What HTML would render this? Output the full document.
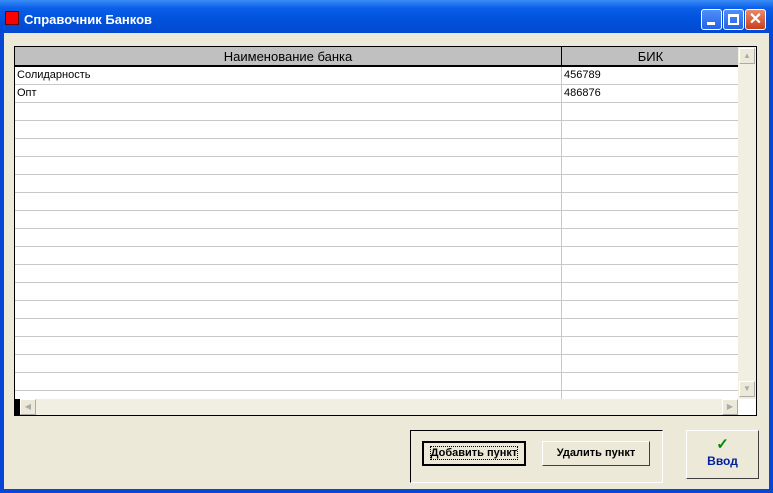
<!DOCTYPE html>
<html><head><meta charset="utf-8"><style>
*{margin:0;padding:0;box-sizing:border-box}
body{width:773px;height:493px;overflow:hidden;background:#ECE9D8;font-family:"Liberation Sans",sans-serif;position:relative}
.tb{position:absolute;left:0;top:0;width:773px;height:33px;background:linear-gradient(#3a8cf6 0%,#0a5ee8 25%,#0052dc 60%,#0349d0 100%)}
.tb .ic{position:absolute;left:5px;top:11px;width:14px;height:14px;background:#f00;border:1px solid #600}
.tb .t{position:absolute;left:24px;top:12px;color:#fff;font-weight:bold;font-size:13px}
.b{position:absolute;top:9px;width:21px;height:21px;border:1px solid #fff;border-radius:3px;background:linear-gradient(#4f8ff8,#2462e6)}
.lb{position:absolute;left:0;top:33px;width:4px;height:460px;background:#0846d8}
.rb{position:absolute;right:0;top:33px;width:4px;height:460px;background:#0846d8}
.bb{position:absolute;left:0;top:489px;width:773px;height:4px;background:#0846d8}
.grid{position:absolute;left:14px;top:46px;width:743px;height:370px;background:#fff;border:1px solid #000}
.hd{position:absolute;left:0;top:0;height:20px;background:#c0c0c0;border-bottom:2px solid #000;font-size:13px;text-align:center;line-height:19px;color:#000}
.row{position:absolute;left:0;width:724px;height:18px;border-bottom:1px solid #c8c8c8;font-size:11px;line-height:17px}
.row span{position:absolute;left:2px}.row span+span{left:549px}
.vl{position:absolute;left:546px;top:20px;width:1px;height:332px;background:#c8c8c8}
.vs{position:absolute;left:723px;top:0;width:18px;height:352px;background:#f1efe2}
.hs{position:absolute;left:5px;top:352px;width:718px;height:16px;background:#f1efe2}
.sb{position:absolute;width:16px;height:16px;background:#ece9d8;border:1px solid #fff;border-right-color:#aaa;border-bottom-color:#aaa;font-size:8px;color:#aaa;text-align:center;line-height:14px}
.gb{position:absolute;left:410px;top:430px;width:253px;height:53px;border:1px solid #000;border-right-color:#fff;border-bottom-color:#fff}
.btn{position:absolute;height:25px;background:#ece9d8;border:1px solid #fff;border-right-color:#404040;border-bottom-color:#404040;font-size:11px;font-weight:bold;text-align:center;line-height:22px}
</style></head><body>
<div class="tb"><div class="ic"></div><div class="t">Справочник Банков</div>
<div class="b" style="left:701px"><div style="position:absolute;left:5px;top:12px;width:8px;height:3px;background:#fff"></div></div>
<div class="b" style="left:723px"><div style="position:absolute;left:4px;top:4px;width:11px;height:11px;border:2px solid #fff;border-top-width:3px"></div></div>
<div class="b" style="left:745px;background:linear-gradient(#e88a6a,#c8401c);color:#fff;font-size:16px;font-weight:bold;text-align:center;line-height:19px">✕</div>
</div>
<div class="lb"></div><div class="rb"></div><div class="bb"></div>
<div class="grid">
<div class="hd" style="width:547px;border-right:1px solid #000">Наименование банка</div>
<div class="hd" style="left:547px;width:177px">БИК</div>
<div class="row" style="top:20px"><span>Солидарность</span><span>456789</span></div>
<div class="row" style="top:38px"><span>Опт</span><span>486876</span></div>
<div class="row" style="top:56px"></div><div class="row" style="top:74px"></div><div class="row" style="top:92px"></div><div class="row" style="top:110px"></div><div class="row" style="top:128px"></div><div class="row" style="top:146px"></div><div class="row" style="top:164px"></div><div class="row" style="top:182px"></div><div class="row" style="top:200px"></div><div class="row" style="top:218px"></div><div class="row" style="top:236px"></div><div class="row" style="top:254px"></div><div class="row" style="top:272px"></div><div class="row" style="top:290px"></div><div class="row" style="top:308px"></div><div class="row" style="top:326px"></div>
<div class="vl"></div>
<div class="vs"><div class="sb" style="left:1px;top:1px">▲</div><div class="sb" style="left:1px;top:334px">▼</div></div>
<div style="position:absolute;left:0;top:352px;width:5px;height:16px;background:#000"></div>
<div class="hs"><div class="sb" style="left:0;top:0">◀</div><div class="sb" style="left:702px;top:0">▶</div></div>
</div>
<div class="gb"></div>
<div class="btn" style="left:422px;top:441px;width:104px;border:2px solid #000;line-height:20px"><span style="outline:1px dotted #000">Добавить пункт</span></div>
<div class="btn" style="left:542px;top:441px;width:108px">Удалить пункт</div>
<div class="btn" style="left:686px;top:430px;width:73px;height:49px;color:#0020a0;font-size:12px;line-height:16px;padding-top:6px"><div style="color:#080;font-size:15px">✓</div>Ввод</div>
</body></html>
